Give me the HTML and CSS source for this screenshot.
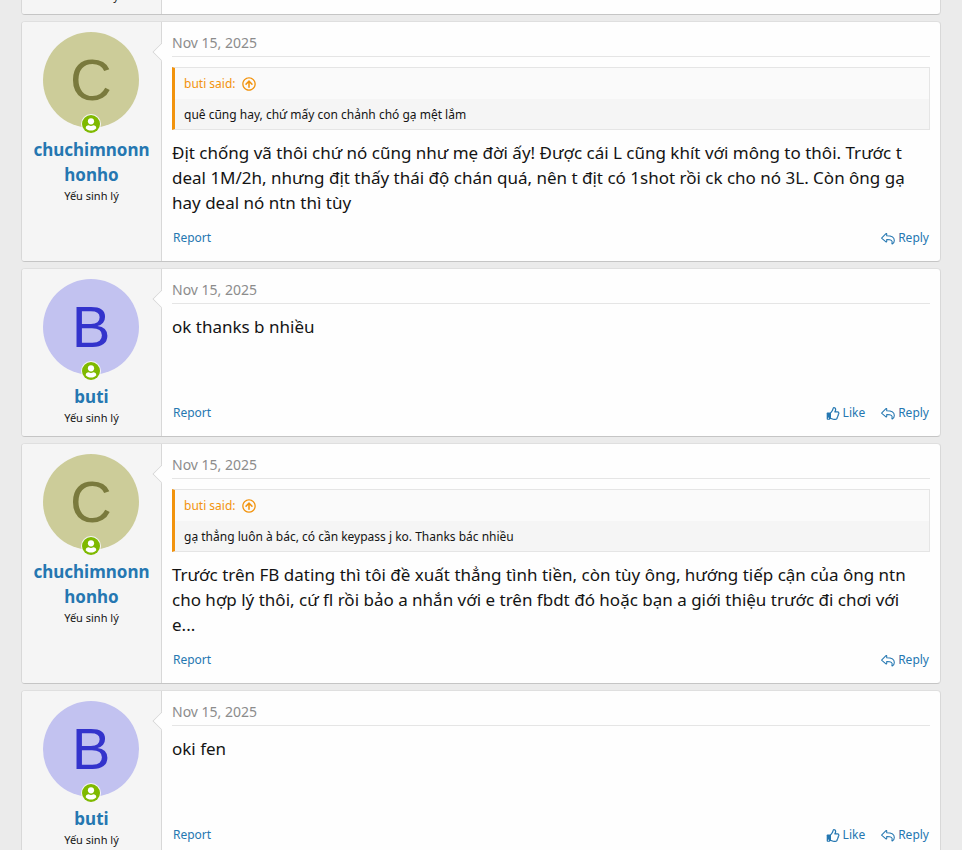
FILE: index.html
```html
<!DOCTYPE html>
<html lang="vi">
<head>
    <meta charset="UTF-8">
    <meta name="viewport" content="width=device-width, initial-scale=1.0">
    <title>Thread</title>
    <link rel="stylesheet" href="styles.css">
</head>
<body>
    <svg class="sprite" aria-hidden="true">
        <symbol id="icon-user" viewBox="0 0 20 20">
            <circle cx="10" cy="10" r="9" fill="#7fb900"/>
            <circle cx="10" cy="7.3" r="3.1" fill="#fff"/>
            <path d="M4.7 14.2c0-2 1.3-2.9 3-2.9.8.5 1.5.7 2.3.7s1.5-.2 2.3-.7c1.7 0 3 .9 3 2.900-1.300 1.500-3.100 2.300-5.300 2.300s-4-.8-5.300-2.300z" fill="#fff"/>
        </symbol>
        <symbol id="icon-up" viewBox="0 0 512 512">
            <path fill="currentColor" d="M256 8C119 8 8 119 8 256s111 248 248 248 248-111 248-248S393 8 256 8zm0 448c-110.500 0-200-89.500-200-200S145.500 56 256 56s200 89.500 200 200-89.500 200-200 200zM124 244l115-116c9-9 25-9 34 0l115 116c9 9 9 24 0 33l-8 8c-9 10-25 9-34 0l-62-65v156c0 13-11 24-24 24h-8c-13 0-24-11-24-24V220l-62 65c-9 9-25 10-34 0l-8-8c-9-9-9-24 0-33z"/>
        </symbol>
        <symbol id="icon-reply" viewBox="0 0 576 512">
            <path fill="none" stroke="currentColor" stroke-width="44" stroke-linejoin="round" d="M33 226 205 55c11-11 30-3 30 13v76c160 2 313 30 313 193 0 62-33 109-77 140-12 8-27-3-22-17 43-126-26-158-214-161v85c0 16-19 24-30 13L33 253c-8-8-8-19 0-27z"/>
        </symbol>
        <symbol id="icon-like" viewBox="0 0 512 512">
            <path fill="none" stroke="currentColor" stroke-width="48" stroke-linejoin="round" d="M152 240c45-30 65-80 88-118 20-32 13-98 48-98 50 0 72 32 72 80 0 38-24 62-30 88h106c32 0 52 26 52 52 0 22-10 38-24 46 8 26-2 52-20 64 6 26-8 50-24 60 4 44-24 74-76 74h-44c-72 0-100-40-148-40z"/>
            <rect x="8" y="216" width="136" height="288" rx="28" fill="currentColor"/>
            <circle cx="76" cy="440" r="22" fill="#fefefe"/>
        </symbol>
    </svg>

    <main class="posts">
        <article class="post post-partial">
            <div class="post-user">
                <div class="user-title">Yếu sinh lý</div>
            </div>
            <div class="post-main"></div>
        </article>

        <article class="post">
            <div class="post-user">
                <div class="avatar avatar-c">C<svg class="online"><use href="#icon-user"/></svg></div>
                <a class="user-name" href="#">chuchimnonnhonho</a>
                <div class="user-title">Yếu sinh lý</div>
            </div>
            <div class="post-main">
                <header class="post-date"><a href="#">Nov 15, 2025</a></header>
                <blockquote class="quote">
                    <a class="quote-title" href="#">buti said: <svg class="icon-up"><use href="#icon-up"/></svg></a>
                    <div class="quote-text">quê cũng hay, chứ mấy con chảnh chó gạ mệt lắm</div>
                </blockquote>
                <div class="post-text">Địt chống vã thôi chứ nó cũng như mẹ đời ấy! Được cái L cũng khít với mông to thôi. Trước t deal 1M/2h, nhưng địt thấy thái độ chán quá, nên t địt có 1shot rồi ck cho nó 3L. Còn ông gạ hay deal nó ntn thì tùy</div>
                <footer class="post-actions">
                    <a class="report" href="#">Report</a>
                    <a href="#"><svg class="icon"><use href="#icon-reply"/></svg>Reply</a>
                </footer>
            </div>
        </article>

        <article class="post">
            <div class="post-user">
                <div class="avatar avatar-b">B<svg class="online"><use href="#icon-user"/></svg></div>
                <a class="user-name" href="#">buti</a>
                <div class="user-title">Yếu sinh lý</div>
            </div>
            <div class="post-main">
                <header class="post-date"><a href="#">Nov 15, 2025</a></header>
                <div class="post-text">ok thanks b nhiều</div>
                <footer class="post-actions">
                    <a class="report" href="#">Report</a>
                    <a href="#"><svg class="icon"><use href="#icon-like"/></svg>Like</a>
                    <a href="#"><svg class="icon"><use href="#icon-reply"/></svg>Reply</a>
                </footer>
            </div>
        </article>

        <article class="post">
            <div class="post-user">
                <div class="avatar avatar-c">C<svg class="online"><use href="#icon-user"/></svg></div>
                <a class="user-name" href="#">chuchimnonnhonho</a>
                <div class="user-title">Yếu sinh lý</div>
            </div>
            <div class="post-main">
                <header class="post-date"><a href="#">Nov 15, 2025</a></header>
                <blockquote class="quote">
                    <a class="quote-title" href="#">buti said: <svg class="icon-up"><use href="#icon-up"/></svg></a>
                    <div class="quote-text">gạ thẳng luôn à bác, có cần keypass j ko. Thanks bác nhiều</div>
                </blockquote>
                <div class="post-text">Trước trên FB dating thì tôi đề xuất thẳng tình tiền, còn tùy ông, hướng tiếp cận của ông ntn cho hợp lý thôi, cứ fl rồi bảo a nhắn với e trên fbdt đó hoặc bạn a giới thiệu trước đi chơi với<br>e...</div>
                <footer class="post-actions">
                    <a class="report" href="#">Report</a>
                    <a href="#"><svg class="icon"><use href="#icon-reply"/></svg>Reply</a>
                </footer>
            </div>
        </article>

        <article class="post">
            <div class="post-user">
                <div class="avatar avatar-b">B<svg class="online"><use href="#icon-user"/></svg></div>
                <a class="user-name" href="#">buti</a>
                <div class="user-title">Yếu sinh lý</div>
            </div>
            <div class="post-main">
                <header class="post-date"><a href="#">Nov 15, 2025</a></header>
                <div class="post-text">oki fen</div>
                <footer class="post-actions">
                    <a class="report" href="#">Report</a>
                    <a href="#"><svg class="icon"><use href="#icon-like"/></svg>Like</a>
                    <a href="#"><svg class="icon"><use href="#icon-reply"/></svg>Reply</a>
                </footer>
            </div>
        </article>
    </main>
</body>
</html>
```
FILE: styles.css
```css
* {
    box-sizing: border-box;
}
body {
    margin: 0;
    height: 100vh;
    overflow: hidden;
    background-color: #ebebeb;
    color: #141414;
    font-family: "Segoe UI", "Noto Sans", sans-serif;
}
a {
    color: #2577b1;
    text-decoration: none;
}
a:hover {
    text-decoration: underline;
}
.sprite {
    display: none;
}
.posts {
    display: flex;
    flex-direction: column;
    gap: 6px;
    padding: 0 21px;
}
.post {
    display: flex;
    flex-shrink: 0;
    background-color: #fefefe;
    border: 1px solid #d8d8d8;
    border-top-color: #dfdfdf;
    border-bottom-color: #c5c5c5;
    border-radius: 4px;
}
/* scrolled past the top edge */
.post-partial {
    margin-top: -24px;
}

/* user column */
.post-user {
    width: 140px;
    flex-shrink: 0;
    padding: 10px;
    background-color: #f5f5f5;
    border-right: 1px solid #d8d8d8;
    border-radius: 3px 0 0 3px;
    text-align: center;
}
.avatar {
    position: relative;
    width: 96px;
    height: 96px;
    margin: 0 0 9px 11px;
    border-radius: 50%;
    font-family: "Liberation Sans", Arial, sans-serif;
    font-size: 58px;
    line-height: 96px;
}
.avatar-c {
    background-color: #cccc99;
    color: #7a7a3d;
}
.avatar-b {
    background-color: #c2c2f0;
    color: #3333cc;
}
.online {
    position: absolute;
    left: 50%;
    bottom: -6px;
    width: 20px;
    height: 20px;
    margin-left: -10px;
    background-color: #f5f5f5;
    border-radius: 50%;
}
.user-name {
    display: block;
    font-size: 17px;
    font-weight: 700;
    line-height: 25px;
    overflow-wrap: break-word;
}
.user-title {
    font-size: 11px;
    line-height: 17px;
}

/* message column */
.post-main {
    position: relative;
    display: flex;
    flex: 1;
    flex-direction: column;
    min-width: 0;
    padding: 10px 10px 13px;
}
.post:not(.post-partial) .post-main::before {
    content: "";
    position: absolute;
    top: 23px;
    left: -7px;
    width: 13px;
    height: 13px;
    background-color: #fefefe;
    border: solid #d8d8d8;
    border-width: 0 0 1px 1px;
    clip-path: polygon(0 0, 100% 100%, 0 100%);
    transform: rotate(45deg);
}
.post-date {
    border-bottom: 1px solid #e5e5e5;
    font-size: 14px;
    line-height: 21px;
    padding-bottom: 3px;
}
.post-date a {
    color: #8c8c8c;
}
.quote {
    margin: 10px 0 0;
    background-color: #f5f5f5;
    border: 1px solid #e5e5e5;
    border-left: 3px solid #f2930d;
}
.quote-title {
    display: flex;
    align-items: center;
    gap: 6px;
    height: 31px;
    padding: 0 9px;
    background-color: #fafafa;
    color: #f2930d;
    font-size: 12px;
}
.icon-up {
    width: 14px;
    height: 14px;
}
.quote-text {
    padding: 2px 9px 0;
    font-size: 12px;
    line-height: 28px;
}
.post-text {
    margin: 10px 0 13px;
    font-size: 17px;
    line-height: 25px;
}
.post-actions {
    display: flex;
    gap: 16px;
    margin-top: auto;
    padding: 0 1px;
    font-size: 12px;
    line-height: 20px;
}
.post-actions a {
    display: flex;
    align-items: center;
    gap: 3px;
}
.report {
    margin-right: auto;
}
.icon {
    width: 14px;
    height: 13px;
}
```
